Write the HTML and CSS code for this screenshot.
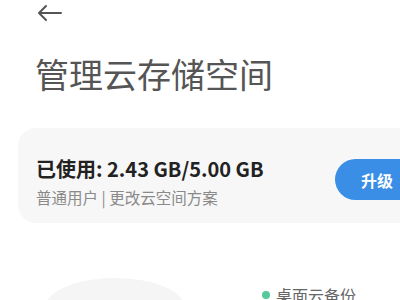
FILE: index.html
```html
<!DOCTYPE html>
<html>
<head>
    <title>管理云存储空间</title>
    <link rel="stylesheet" href="styles.css">
</head>
<body>
    <div class="page">
        <div class="topbar">
            <svg class="back" width="26" height="18" viewBox="0 0 26 18">
                <path d="M24 9H2M9 2L2 9l7 7" fill="none" stroke="#555" stroke-width="2" stroke-linecap="round" stroke-linejoin="round"/>
            </svg>
        </div>

        <h1>管理云存储空间</h1>

        <div class="card">
            <div class="usage">
                <div class="used">已使用: 2.43 GB/5.00 GB</div>
                <div class="plan">普通用户 | 更改云空间方案</div>
            </div>
            <button class="upgrade">升级</button>
        </div>

        <div class="breakdown">
            <div class="chart"></div>
            <ul class="legend">
                <li><span class="dot"></span>桌面云备份</li>
            </ul>
        </div>
    </div>
</body>
</html>
```

FILE: styles.css
```css
body {
    margin: 0;
    background: #ffffff;
    font-family: "Noto Sans CJK SC", "Noto Sans", sans-serif;
    color: #333;
    overflow: hidden;
}

.page {
    width: 400px;
    height: 300px;
    overflow: hidden;
}

.topbar {
    height: 26px;
    padding: 4px 0 0 37px;
    box-sizing: border-box;
}

.back {
    display: block;
}

h1 {
    margin: 31px 0 0 35px;
    font-size: 34px;
    line-height: 34px;
    font-weight: 400;
    color: #555;
    white-space: nowrap;
}

.card {
    display: flex;
    align-items: flex-start;
    justify-content: space-between;
    width: 440px;
    height: 95px;
    margin: 37px 0 0 18px;
    padding: 31px 39px 0 18px;
    box-sizing: border-box;
    background: #f7f7f7;
    border-radius: 18px;
}

.used {
    font-size: 20px;
    line-height: 20px;
    font-weight: 700;
    color: #222;
    white-space: nowrap;
}

.plan {
    margin-top: 10px;
    font-size: 15.5px;
    line-height: 16px;
    color: #8a8a8a;
    white-space: nowrap;
}

.upgrade {
    width: 84px;
    height: 41px;
    margin-top: 0;
    border: none;
    border-radius: 21px;
    background: #3a8ee6;
    color: #fff;
    font-family: inherit;
    font-size: 16px;
    font-weight: 700;
    padding: 0;
}

.breakdown {
    display: flex;
    margin-top: 55px;
}

.chart {
    width: 140px;
    height: 80px;
    margin-left: 45px;
    background: #f5f5f5;
    border-radius: 70px 70px 0 0 / 30px 30px 0 0;
}

.legend {
    list-style: none;
    margin: 8px 0 0 77px;
    padding: 0;
}

.legend li {
    display: flex;
    align-items: center;
    font-size: 16px;
    line-height: 18px;
    color: #666;
}

.dot {
    width: 8px;
    height: 8px;
    margin-right: 6px;
    border-radius: 50%;
    background: #55c99a;
}
```
